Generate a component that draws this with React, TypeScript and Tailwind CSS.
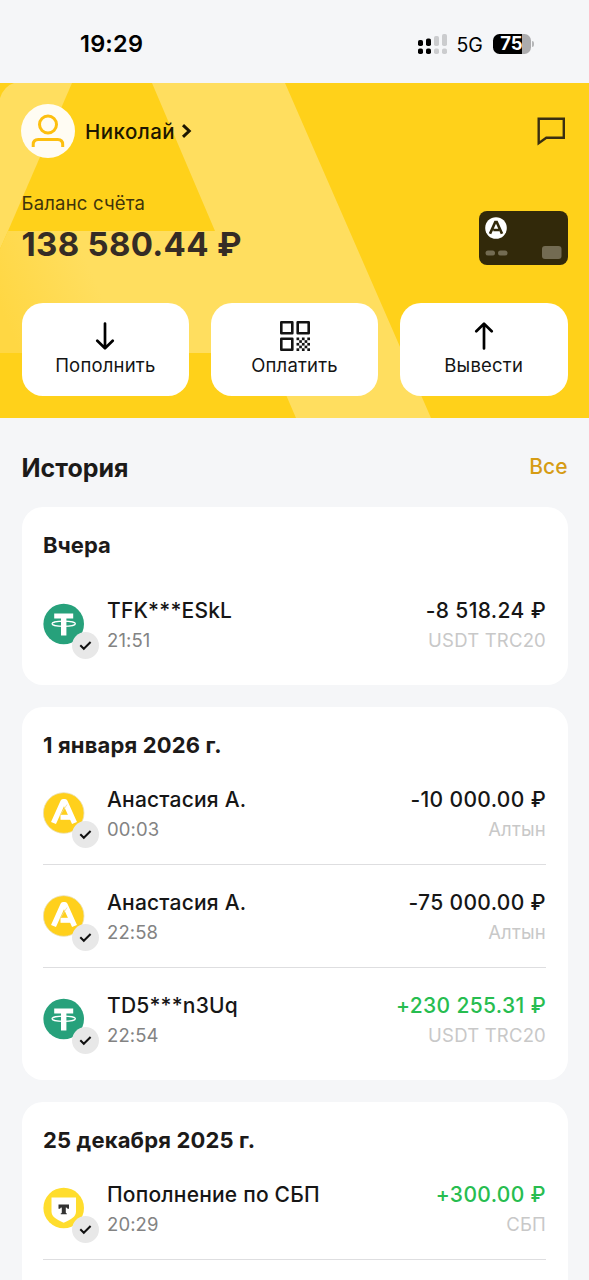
import type { ReactNode } from "react";

type Kind = "usdt" | "altyn" | "tbank";

type Operation = {
    kind: Kind;
    name: string;
    time: string;
    amount: string;
    method: string;
    income?: boolean;
};

const yesterday: Operation[] = [
    { kind: "usdt", name: "TFK***ESkL", time: "21:51", amount: "-8 518.24 ₽", method: "USDT TRC20" },
];

const january: Operation[] = [
    { kind: "altyn", name: "Анастасия А.", time: "00:03", amount: "-10 000.00 ₽", method: "Алтын" },
    { kind: "altyn", name: "Анастасия А.", time: "22:58", amount: "-75 000.00 ₽", method: "Алтын" },
    { kind: "usdt", name: "TD5***n3Uq", time: "22:54", amount: "+230 255.31 ₽", method: "USDT TRC20", income: true },
];

const december: Operation[] = [
    { kind: "tbank", name: "Пополнение по СБП", time: "20:29", amount: "+300.00 ₽", method: "СБП", income: true },
];

function StatusBar() {
    return (
        <div className="flex h-[83px] items-start justify-between pt-[30px] pr-[55px] pl-[80px] text-black">
            <span className="text-[23.5px] leading-7 font-semibold tracking-[0.2px]">19:29</span>
            <div className="flex h-7 items-center">
                <svg width="30" height="20" viewBox="0 0 30 20">
                    <g fill="#000">
                        <rect x="0" y="6" width="5" height="6" rx="1.8" />
                        <rect x="8" y="4.5" width="5" height="7.5" rx="1.8" />
                        <rect x="0" y="14.5" width="5" height="5.5" rx="1.8" />
                        <rect x="8" y="14.5" width="5" height="5.5" rx="1.8" />
                    </g>
                    <g fill="#cbccce">
                        <rect x="16" y="2" width="5" height="10" rx="1.8" />
                        <rect x="24" y="0" width="5" height="12" rx="1.8" />
                        <rect x="16" y="14.5" width="5" height="5.5" rx="1.8" />
                        <rect x="24" y="14.5" width="5" height="5.5" rx="1.8" />
                    </g>
                </svg>
                <span className="ml-[9px] w-[27px] pt-px text-[19.5px] leading-7">5G</span>
                <div className="mb-px ml-[9px] flex h-5 w-[38px] items-center justify-center overflow-hidden rounded-[6.5px] bg-[linear-gradient(90deg,#000_76%,#acacae_76%)] text-[18.5px] font-bold text-white">
                    75
                </div>
                <div className="ml-[1.5px] h-[6px] w-[2px] rounded-r-full bg-[#b5b6b8]" />
            </div>
        </div>
    );
}

function Watermark() {
    return (
        <svg className="absolute inset-0 h-full w-full" viewBox="0 0 589 335" preserveAspectRatio="none">
            <defs>
                <linearGradient id="bar" gradientUnits="userSpaceOnUse" x1="0" y1="225" x2="90" y2="185">
                    <stop offset="0" stopColor="#ffd743" />
                    <stop offset="1" stopColor="#ffde5f" />
                </linearGradient>
            </defs>
            <path d="M14 0H72L8 148L0 166V15Q4 3 14 0Z" fill="#ffde5f" />
            <path d="M8 148H215L152 0H285L431 335H296L268 270H0V166Z" fill="url(#bar)" />
        </svg>
    );
}

function ActionButton({ label, children }: { label: string; children: ReactNode }) {
    return (
        <button className="flex h-[93px] flex-1 flex-col items-center rounded-[21px] bg-white pt-[17px] text-[#141414]">
            <span className="flex h-[31px] items-center">{children}</span>
            <span className="text-[18.5px] leading-7 tracking-[0.2px]">{label}</span>
        </button>
    );
}

function QrIcon() {
    const dots = [];
    for (let y = 0; y < 5; y++) {
        for (let x = 0; x < 5; x++) {
            if ((x + y) % 2 === 0) dots.push(<rect key={`${x}-${y}`} x={16.5 + x * 2.7} y={16.5 + y * 2.7} width="2.7" height="2.7" />);
        }
    }
    return (
        <svg width="30" height="30" viewBox="0 0 30 30" fill="#141414">
            <g fill="none" stroke="#141414" strokeWidth="2.6" strokeLinejoin="round">
                <rect x="1.3" y="1.3" width="11" height="11" />
                <rect x="17.7" y="1.3" width="11" height="11" />
                <rect x="1.3" y="17.7" width="11" height="11" />
            </g>
            {dots}
        </svg>
    );
}

function Hero() {
    return (
        <section className="relative h-[335px] overflow-hidden bg-[#ffd11a]">
            <Watermark />
            <div className="relative flex h-full flex-col px-[21.5px] pt-[21px]">
                <div className="flex h-[54px] items-center">
                    <div className="-ml-[0.5px] h-[54px] w-[54px] rounded-full bg-[#fffcf3]">
                        <svg width="54" height="54" viewBox="0 0 54 54" fill="none" stroke="#fdbf0f" strokeWidth="3">
                            <circle cx="27" cy="20.5" r="8.5" />
                            <path d="M12.2 43V40.5Q12.2 35.5 17.2 35.5H36.7Q41.7 35.5 41.7 40.5V43" />
                        </svg>
                    </div>
                    <span className="ml-[10px] pt-[2px] text-[20.5px] leading-7 font-medium tracking-[0.45px] text-[#1c1600]">Николай</span>
                    <svg className="ml-[6px]" width="12" height="16" viewBox="0 0 12 16" fill="none" stroke="#1c1600" strokeWidth="3">
                        <path d="M2 2.2L8.2 8L2 13.8" />
                    </svg>
                    <svg className="mr-px ml-auto" width="30" height="30" viewBox="0 0 30 30" fill="none" stroke="#3a2f10" strokeWidth="2.4">
                        <path d="M1.7 2.7H26.8V21.8H9.3L1.7 27.2Z" />
                    </svg>
                </div>
                <div className="mt-[32px] flex h-[76px] justify-between">
                    <div>
                        <p className="text-[18.5px] leading-[26px] tracking-[0.2px] text-[#40340b]">Баланс счёта</p>
                        <p className="mt-[8px] text-[33px] leading-[40px] font-bold tracking-[0.3px] whitespace-nowrap text-[#352c25]">138 580.44 ₽</p>
                    </div>
                    <div className="mt-[21px] h-[54px] w-[89px] rounded-[8px] bg-[#32290a]">
                        <svg width="89" height="54" viewBox="0 0 89 54" fill="none">
                            <circle cx="17" cy="17" r="10.8" fill="#fff" />
                            <path d="M11 22.7L16.3 11H17.7L23 22.7M14.3 19H20" stroke="#32290a" strokeWidth="2.7" />
                            <rect x="6.5" y="39.5" width="9.5" height="5" rx="2.5" fill="#736b52" />
                            <rect x="19" y="39.5" width="9.5" height="5" rx="2.5" fill="#736b52" />
                            <rect x="63" y="35" width="19.5" height="13" rx="3" fill="#736b52" />
                        </svg>
                    </div>
                </div>
                <div className="mt-[37px] flex gap-[21.5px]">
                    <ActionButton label="Пополнить">
                        <svg width="20" height="28" viewBox="0 0 20 28" fill="none" stroke="#000" strokeWidth="2.7" strokeLinecap="round" strokeLinejoin="round">
                            <path d="M10 1.5V26M2.3 18.7L10 26.3L17.7 18.7" />
                        </svg>
                    </ActionButton>
                    <ActionButton label="Оплатить">
                        <QrIcon />
                    </ActionButton>
                    <ActionButton label="Вывести">
                        <svg width="20" height="28" viewBox="0 0 20 28" fill="none" stroke="#000" strokeWidth="2.7" strokeLinecap="round" strokeLinejoin="round">
                            <path d="M10 26.5V2M2.3 9.3L10 1.7L17.7 9.3" />
                        </svg>
                    </ActionButton>
                </div>
            </div>
        </section>
    );
}

function Logo({ kind }: { kind: Kind }) {
    if (kind === "usdt") {
        return (
            <svg width="42" height="42" viewBox="0 0 42 42">
                <circle cx="20.7" cy="21" r="20.3" fill="#27a17b" />
                <path d="M11.2 10.5H30.2V15.5H23.4V32.5H18V15.5H11.2Z" fill="#fff" />
                <ellipse cx="20.7" cy="20.8" rx="11.7" ry="2.6" fill="none" stroke="#fff" strokeWidth="1.2" />
            </svg>
        );
    }
    if (kind === "altyn") {
        return (
            <svg width="42" height="42" viewBox="0 0 42 42" fill="none">
                <circle cx="20.7" cy="21" r="20.3" fill="#ffd01c" stroke="#e9dfb8" strokeWidth="0.8" />
                <path d="M10.5 31L20 9.8H22L31.5 31" stroke="#fff" strokeWidth="5.4" strokeLinejoin="round" />
                <path d="M17.5 25.3H28" stroke="#fff" strokeWidth="5" />
                <path d="M24 12.5L17 23.5" stroke="#ecdca0" strokeWidth="0.8" />
            </svg>
        );
    }
    return (
        <svg width="42" height="42" viewBox="0 0 42 42">
            <circle cx="20.7" cy="21" r="20.3" fill="#ffdd2d" />
            <path d="M8.5 10.5H33V24.5C33 29.5 28.3 32.5 20.7 35.7C13.2 32.5 8.5 29.5 8.5 24.5Z" fill="#fff" />
            <path d="M15.5 17.5H26V21.8H24.5Q24.3 20.6 22.8 20.6V25.4Q22.8 26.2 23.8 26.3V27.3H17.8V26.3Q18.8 26.2 18.8 25.4V20.6Q17.3 20.6 17.1 21.8H15.5Z" fill="#333" />
        </svg>
    );
}

function OperationRow({ op, last }: { op: Operation; last: boolean }) {
    return (
        <li className={last ? "flex h-[103px] pt-6" : "flex h-[103px] border-b border-[#dedee0] pt-6"}>
            <div className="relative mt-[6px] h-[42px] w-[42px]">
                <Logo kind={op.kind} />
                <span className="absolute top-[28.5px] left-[29px] flex h-[27px] w-[27px] items-center justify-center rounded-full bg-[#e8e8e8]">
                    <svg width="13" height="11" viewBox="0 0 13 11" fill="none" stroke="#111" strokeWidth="2">
                        <path d="M1.3 5.3L4.8 8.8L11.6 2" />
                    </svg>
                </span>
            </div>
            <div className="ml-[22px]">
                <p className="text-[21px] leading-7 font-[450] tracking-[0.2px] text-[#161616]">{op.name}</p>
                <p className="text-[18.5px] leading-[30px] tracking-[0.1px] text-[#838383]">{op.time}</p>
            </div>
            <div className="ml-auto text-right">
                <p className={op.income ? "text-[21px] leading-7 font-[450] tracking-[0.36px] text-[#27bd50]" : "text-[21px] leading-7 font-[450] tracking-[0.36px] text-[#161616]"}>{op.amount}</p>
                <p className="text-[18.5px] leading-[30px] tracking-[0.2px] text-[#c8c8c8]">{op.method}</p>
            </div>
        </li>
    );
}

function DayCard({ title, items, roomy, more }: { title: string; items: Operation[]; roomy?: boolean; more?: boolean }) {
    return (
        <section className={more ? "rounded-t-[21px] bg-white px-[21.5px] pt-6 pb-8" : "rounded-[21px] bg-white px-[21.5px] pt-6 pb-[9px]"}>
            <h3 className={roomy ? "mb-[14px] text-[22px] leading-7 font-bold" : "mb-[3px] text-[22px] leading-7 font-bold tracking-[0.15px]"}>{title}</h3>
            <ul>
                {items.map((op, i) => (
                    <OperationRow key={i} op={op} last={!more && i === items.length - 1} />
                ))}
            </ul>
        </section>
    );
}

export default function App() {
    return (
        <div className="h-[1280px] w-[589px] overflow-hidden bg-[#f5f6f8] font-['Inter',sans-serif] text-[#1c1a19]">
            <StatusBar />
            <Hero />
            <main className="px-[21.5px]">
                <div className="flex h-[89px] items-center justify-between pt-[11px]">
                    <h2 className="text-[25px] leading-8 font-bold">История</h2>
                    <a className="mb-[3px] text-[21px] leading-7 font-[450] text-[#d69c14]">Все</a>
                </div>
                <div className="flex flex-col gap-[22px]">
                    <DayCard title="Вчера" items={yesterday} roomy />
                    <DayCard title="1 января 2026 г." items={january} />
                    <DayCard title="25 декабря 2025 г." items={december} more />
                </div>
            </main>
        </div>
    );
}
